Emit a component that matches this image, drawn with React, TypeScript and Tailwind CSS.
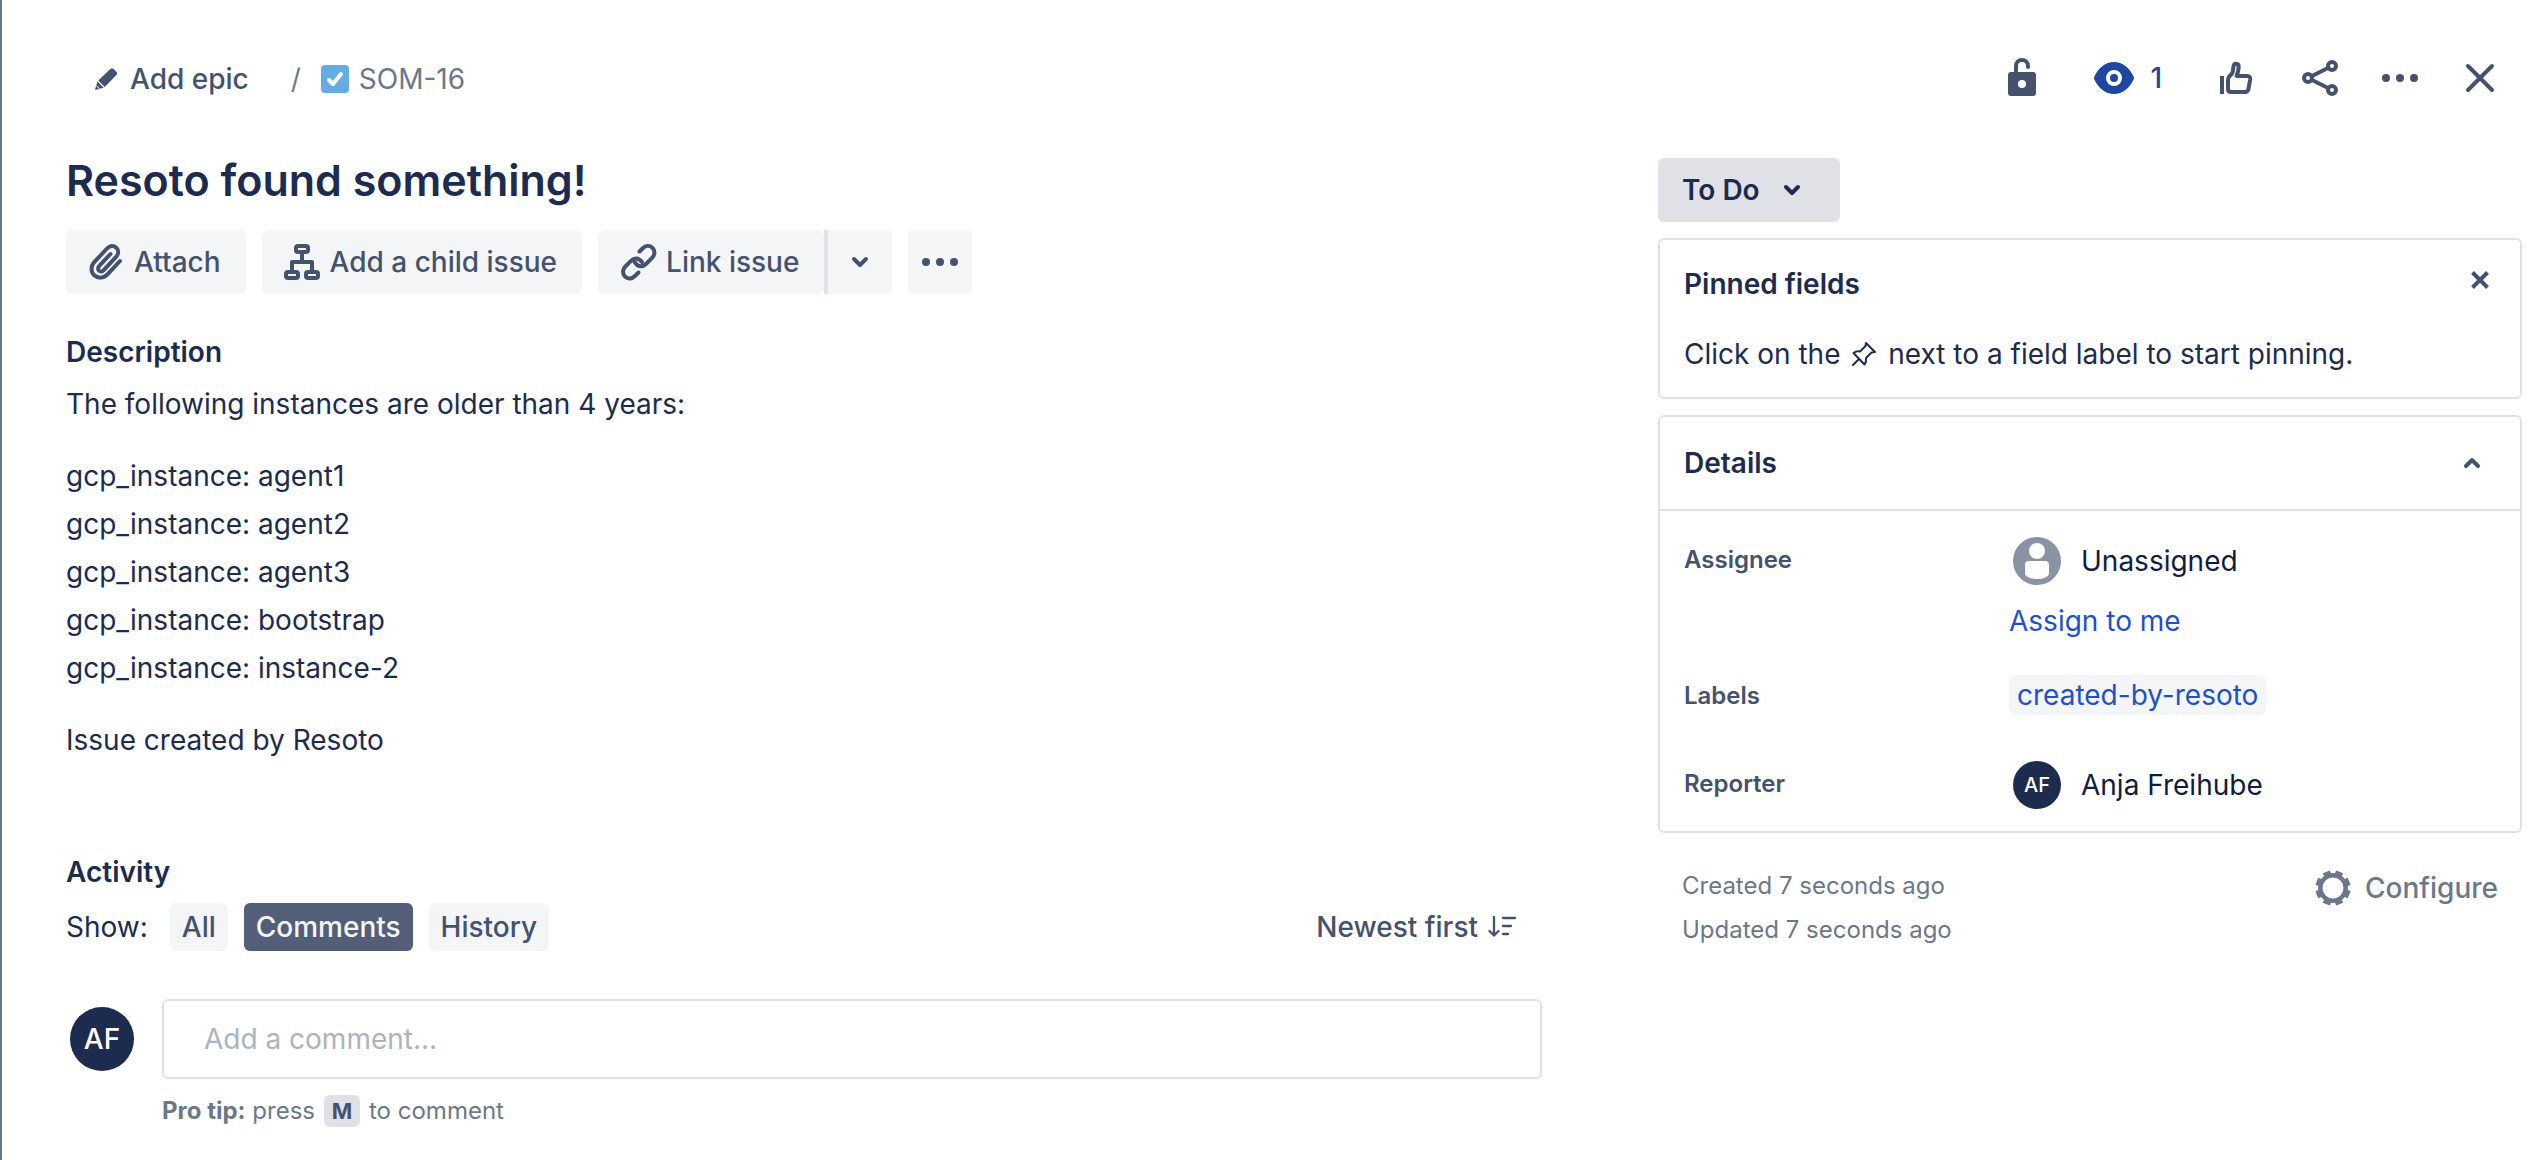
import type { ReactNode } from "react";

type IconProps = { className?: string; children?: ReactNode; box?: string };

function Icon({ className = "size-12", box = "0 0 48 48", children }: IconProps) {
  return (
    <svg
      className={"shrink-0 " + className}
      viewBox={box}
      fill="none"
      stroke="currentColor"
      strokeWidth="4"
      strokeLinecap="round"
      strokeLinejoin="round"
      aria-hidden="true"
    >
      {children}
    </svg>
  );
}

const PencilIcon = () => (
  <Icon className="size-8" box="0 0 32 32">
    <g fill="currentColor" stroke="none">
      <path d="M8.300 17.500 20.300 6c1-1 2.300-1 3.300 0l2.800 2.800c1 1 1 2.300 0 3.300L14.800 24z" />
      <path d="M7.500 18.600 13.700 24.800 6.200 26.800c-.7.200-1.200-.3-1-1z" />
    </g>
    <path d="m6.500 22.800 3 3" stroke="white" strokeWidth="1" />
  </Icon>
);

const AttachIcon = () => (
  <Icon>
    <path d="M38 23 25.500 36.400c-3.700 4-9.600 4.300-13.300.9-3.600-3.400-3.500-9.200 0-13.100L25 10.500c2.700-2.900 6.700-3.200 9.300-.8 2.500 2.400 2.400 6.300-.2 9.100L21.500 32.300c-1.300 1.400-3.200 1.500-4.500.3s-1.200-3.100.1-4.500L28.500 16" />
  </Icon>
);

const ChildIcon = () => (
  <Icon>
    <rect x="18" y="8" width="12" height="6" rx="2" />
    <rect x="8" y="34" width="12" height="6" rx="2" />
    <rect x="28" y="34" width="12" height="6" rx="2" />
    <path d="M24 14v10M14 34V24h20v10" strokeLinecap="butt" />
  </Icon>
);

const LinkIcon = () => (
  <Icon>
    <path d="M25.500 13.500 28.500 10.500c3-3 7.200-3.300 10-.6s2.500 7-.4 10L32 26c-3.200 3.200-7.600 3-10-.2l-1.500-2" />
    <path d="M24.500 34.500 21 38c-3 3-7.200 3.200-10 .5s-2.600-7 .4-10L17 22.800c3.200-3.200 7.600-3 10 .2l1 1" />
  </Icon>
);

const ChevronDown = () => (
  <Icon className="size-8" box="0 0 32 32">
    <path d="m10 13 6 6 6-6" />
  </Icon>
);

const ChevronUp = () => (
  <Icon className="size-8" box="0 0 32 32">
    <path d="m10 19 6-6 6 6" />
  </Icon>
);

const DotsIcon = () => (
  <Icon>
    <g fill="currentColor" stroke="none">
      <circle cx="10" cy="24" r="4" />
      <circle cx="24" cy="24" r="4" />
      <circle cx="38" cy="24" r="4" />
    </g>
  </Icon>
);

const UnlockIcon = () => (
  <Icon>
    <path
      fill="currentColor"
      stroke="none"
      fillRule="evenodd"
      d="M13 18h22a3 3 0 0 1 3 3v18a3 3 0 0 1-3 3H13a3 3 0 0 1-3-3V21a3 3 0 0 1 3-3Zm11 8a4 4 0 1 0 0 8 4 4 0 0 0 0-8Z"
    />
    <path d="M18 20v-8c0-3.500 2.500-6 6-6s6 2.500 6 6v1" />
  </Icon>
);

const EyeIcon = () => (
  <Icon>
    <path
      fill="currentColor"
      stroke="none"
      fillRule="evenodd"
      d="M24 8c8.500 0 15.500 5.800 19.500 14.200.6 1.300.6 2.300 0 3.600C39.500 34.200 32.500 40 24 40S8.500 34.200 4.500 25.800c-.6-1.300-.6-2.300 0-3.600C8.500 13.800 15.500 8 24 8Zm0 8a8 8 0 1 0 0 16 8 8 0 0 0 0-16Z"
    />
    <circle cx="24" cy="24" r="4" fill="currentColor" stroke="none" />
  </Icon>
);

const ThumbIcon = () => (
  <Icon>
    <path d="M10 24v14" strokeLinecap="square" />
    <path d="M16 26c0-1.500.3-2.300 1.200-3.300l2.300-2.500c.8-.9 1.100-1.700 1.300-2.900l.8-5.300c.3-1.600 1.300-2.300 2.600-2.200 1.800.1 2.600 1.500 2.500 3.400-.1 2.300-.8 5.300-2.100 8.800h10.600c2.200 0 3.300 1.500 3 3.500l-1.800 9.700c-.4 2-1.500 2.800-3.400 2.800H19c-2 0-3-1-3-3z" />
  </Icon>
);

const ShareIcon = () => (
  <Icon>
    <circle cx="12" cy="24" r="4" />
    <circle cx="36" cy="12" r="4" />
    <circle cx="36" cy="36" r="4" />
    <path d="m16 22 16-8M16 26l16 8" />
  </Icon>
);

const CloseIcon = () => (
  <Icon>
    <path d="m12 12 24 24M36 12 12 36" />
  </Icon>
);

const SmallCloseIcon = () => (
  <Icon className="size-8" box="0 0 32 32">
    <path d="m8.500 8.500 15 15M23.500 8.500l-15 15" strokeLinecap="butt" />
  </Icon>
);

const PinIcon = () => (
  <svg
    className="inline size-8 align-[-6px]"
    viewBox="0 0 32 32"
    fill="none"
    stroke="currentColor"
    strokeWidth="2"
    strokeLinejoin="round"
    strokeLinecap="round"
    aria-hidden="true"
  >
    <path d="m18 5 9 9-3.500.5-5.500 5.500c.4 2.200 0 4.500-1.500 6.500L5.500 15c2-1.500 4.300-2 6.500-1.500L17.500 8zM10.500 21.500 5 27" />
  </svg>
);

const SortIcon = () => (
  <Icon className="size-8" box="0 0 32 32">
    <g strokeWidth="2.300">
      <path d="M8 6v18M3.500 20 8 24.500l4.500-4.500" />
      <path d="M17 7h12M17 15h8M17 23h5" />
    </g>
  </Icon>
);

const GearIcon = () => (
  <Icon>
    <circle cx="24" cy="24" r="12.700" strokeWidth="4.500" />
    <g strokeWidth="7.500" strokeLinecap="butt">
      {[0, 45, 90, 135, 180, 225, 270, 315].map((a) => (
        <path key={a} d="M24 11V6.500" transform={`rotate(${a + 22.5} 24 24)`} />
      ))}
    </g>
  </Icon>
);

function ActionButton({ icon, children }: { icon: ReactNode; children: ReactNode }) {
  return (
    <button className="flex h-16 items-center gap-1 rounded-md bg-[#f4f5f7] pr-[25px] pl-4 font-medium text-[#44526e]">
      {icon}
      {children}
    </button>
  );
}

function Field({ label, children }: { label: string; children: ReactNode }) {
  return (
    <>
      <dt className="pt-[7px] text-2xl font-semibold text-[#44526e]">{label}</dt>
      <dd className="min-h-12">{children}</dd>
    </>
  );
}

function Filter({ active = false, children }: { active?: boolean; children: ReactNode }) {
  return (
    <button
      aria-pressed={active}
      className={
        "h-12 rounded-md px-3 font-medium " +
        (active ? "bg-[#535f78] text-[#f4f5f7]" : "bg-[#f4f5f7] text-[#44526e]")
      }
    >
      {children}
    </button>
  );
}

const instances = ["agent1", "agent2", "agent3", "bootstrap", "instance-2"];

export default function App() {
  return (
    <div className="min-h-screen border-l-2 border-[#69758e] bg-white pr-[18px] pl-16 font-[Inter,sans-serif] text-[28px] leading-10 text-[#1c2b4e]">
      <header className="flex h-[158px] items-start justify-between pt-[54px]">
        <nav aria-label="Breadcrumb" className="flex h-[50px] items-center pl-6 text-[#6c7789]">
          <button className="flex items-center gap-2 font-medium text-[#44526e]">
            <PencilIcon />
            Add epic
          </button>
          <span className="pr-5 pl-[42px]">/</span>
          <a href="#som-16" className="flex items-center gap-2.5">
            <svg className="size-7" viewBox="0 0 28 28" aria-hidden="true">
              <rect width="28" height="28" rx="4" fill="#65abe4" />
              <path d="m8 15 4 4 8-10" fill="none" stroke="white" strokeWidth="4" strokeLinecap="round" strokeLinejoin="round" />
            </svg>
            SOM-16
          </a>
        </nav>
        <div className="flex h-12 items-center pr-[18px] text-[#44526e]">
          <button aria-label="Restrict" className="mr-11"><UnlockIcon /></button>
          <button aria-label="Watchers" className="mr-[50px] flex items-center gap-3 font-medium text-[#1f46a0]">
            <EyeIcon />1
          </button>
          <button aria-label="Vote" className="mr-9"><ThumbIcon /></button>
          <button aria-label="Share" className="mr-8"><ShareIcon /></button>
          <button aria-label="Actions" className="mr-8"><DotsIcon /></button>
          <button aria-label="Close"><CloseIcon /></button>
        </div>
      </header>

      <div className="flex items-start gap-[116px]">
        <main className="min-w-0 flex-[1476]">
          <h1 className="text-[43px] leading-[44px] font-semibold">Resoto found something!</h1>
          <div className="mt-7 flex gap-4">
            <ActionButton icon={<AttachIcon />}>Attach</ActionButton>
            <ActionButton icon={<ChildIcon />}>Add a child issue</ActionButton>
            <div className="flex">
              <ActionButton icon={<LinkIcon />}>Link issue</ActionButton>
              <button aria-label="More link types" className="flex w-17 items-center justify-center rounded-r-md border-l-4 border-[#dfe1e6] bg-[#f4f5f7] text-[#44526e]">
                <ChevronDown />
              </button>
            </div>
            <button aria-label="More" className="flex size-16 items-center justify-center rounded-md bg-[#f4f5f7] text-[#44526e]">
              <DotsIcon />
            </button>
          </div>

          <h2 className="mt-[38px] font-semibold">Description</h2>
          <div className="mt-2 space-y-6 leading-[48px]">
            <p>The following instances are older than 4 years:</p>
            <p>
              {instances.map((name) => (
                <span key={name} className="block">gcp_instance: {name}</span>
              ))}
            </p>
            <p>Issue created by Resoto</p>
          </div>

          <h2 className="mt-[88px] font-semibold">Activity</h2>
          <div className="mt-[11px] flex items-center justify-between pr-6">
            <div className="flex items-center gap-4">
              <span className="mr-1.5">Show:</span>
              <Filter>All</Filter>
              <Filter active>Comments</Filter>
              <Filter>History</Filter>
            </div>
            <button className="flex items-center gap-2 font-medium text-[#44526e]">
              Newest first
              <SortIcon />
            </button>
          </div>

          <div className="mt-12 flex gap-7 pl-1">
            <span className="mt-2 flex size-16 shrink-0 items-center justify-center rounded-full bg-[#1c2b4e] font-medium text-white">AF</span>
            <div className="min-w-0 flex-1">
              <input
                aria-label="Add a comment"
                placeholder="Add a comment…"
                className="block h-20 w-full rounded-md border-2 border-[#dfe1e6] px-10 placeholder:text-[#abb2c0]"
              />
              <p className="mt-4 text-2xl text-[#6c7789]">
                <strong className="font-bold">Pro tip:</strong> press{" "}
                <kbd className="mx-0.5 inline-block h-8 rounded-md bg-[#dfe1e6] px-2 font-[Inter] text-[22px] leading-8 font-bold text-[#44526e]">M</kbd>{" "}
                to comment
              </p>
            </div>
          </div>
        </main>

        <aside className="min-w-0 flex-[864]">
          <button className="flex h-16 items-center gap-4 rounded-md bg-[#dfe1e6] pr-8 pl-6 font-semibold">
            To Do
            <ChevronDown />
          </button>

          <section className="mt-4 rounded-md border-2 border-[#dfe1e6] px-6 pt-6 pb-[23px]">
            <div className="flex items-start justify-between">
              <h2 className="font-semibold">Pinned fields</h2>
              <button aria-label="Dismiss" className="text-[#44526e]"><SmallCloseIcon /></button>
            </div>
            <p className="mt-[30px]">
              Click on the <PinIcon /> next to a field label to start pinning.
            </p>
          </section>

          <section className="mt-4 rounded-md border-2 border-[#dfe1e6]">
            <div className="flex h-[94px] items-center justify-between border-b-2 border-[#dfe1e6] pr-8 pl-6">
              <h2 className="font-semibold">Details</h2>
              <button aria-label="Collapse" className="text-[#44526e]"><ChevronUp /></button>
            </div>
            <dl className="grid grid-cols-[325px_1fr] gap-y-8 px-6 pt-[26px] pb-[22px]">
              <Field label="Assignee">
                <div className="flex items-center gap-5 pl-1 text-[#0f1d40]">
                  <svg className="size-12" viewBox="0 0 48 48" aria-hidden="true">
                    <circle cx="24" cy="24" r="24" fill="#8a93a5" />
                    <circle cx="24" cy="14" r="8" fill="white" />
                    <path d="M12 28a4 4 0 0 1 4-4h16a4 4 0 0 1 4 4v8c0 4-6 6-12 6s-12-2-12-6z" fill="white" />
                  </svg>
                  Unassigned
                </div>
                <button className="mt-4 block text-[#1f50c9]">Assign to me</button>
              </Field>
              <Field label="Labels">
                <div className="h-14 pt-0.5">
                  <a href="#created-by-resoto" className="inline-block rounded-md bg-[#f4f5f7] px-2 text-[#1f50c9]">created-by-resoto</a>
                </div>
              </Field>
              <Field label="Reporter">
                <div className="flex items-center gap-5 pl-1 text-[#0f1d40]">
                  <span className="flex size-12 items-center justify-center rounded-full bg-[#1c2b4e] text-xl font-medium text-white">AF</span>
                  Anja Freihube
                </div>
              </Field>
            </dl>
          </section>

          <footer className="mt-[31px] flex items-start justify-between px-6 text-[#6c7789]">
            <div className="text-2xl leading-[44px]">
              <p>Created 7 seconds ago</p>
              <p>Updated 7 seconds ago</p>
            </div>
            <button className="flex items-center gap-2 font-medium"><GearIcon />Configure</button>
          </footer>
        </aside>
      </div>
    </div>
  );
}
